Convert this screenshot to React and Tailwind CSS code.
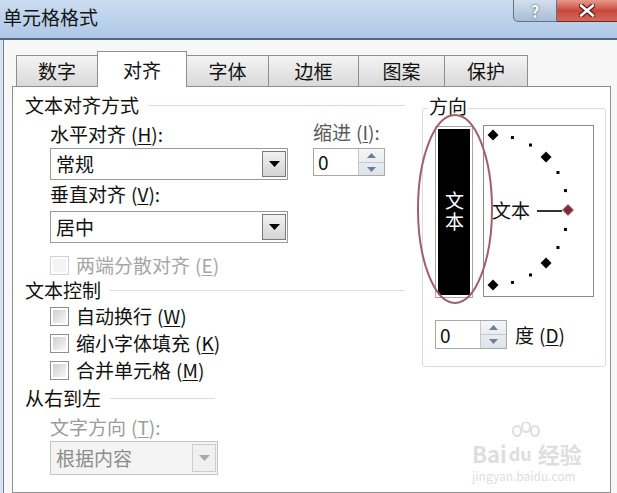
import React from 'react';

// underlined access key, e.g. (H)
const Key = ({ k }) => (
  <span className="ml-[5px]">
    (<span className="underline underline-offset-2">{k}</span>)
  </span>
);

const Checkbox = ({ disabled }) => (
  <span
    className={`flex w-[19px] h-[19px] shrink-0 border p-[2px] ${
      disabled ? 'border-[#d2d2d2]' : 'border-[#8e8f8f]'
    }`}
  >
    <span
      className={`flex-1 ${
        disabled ? 'bg-[#f4f4f4]' : 'bg-linear-to-br from-[#cfcfcf] to-[#f8f8f8]'
      }`}
    />
  </span>
);

const Select = ({ value, disabled, className = '' }) => (
  <div
    className={`flex items-center justify-between border ${
      disabled ? 'border-[#c4c4c4] bg-[#f4f4f4] text-[#8c8c8c]' : 'border-[#9a9a9a] bg-white'
    } ${className}`}
  >
    <span className="pl-[5px]">{value}</span>
    <span
      className={`mr-px flex h-[calc(100%-4px)] w-[24px] items-center justify-center border ${
        disabled
          ? 'border-[#cdcdcd] bg-[#f0f0f0]'
          : 'border-[#7a7a7a] bg-linear-to-b from-[#f2f2f2] to-[#d4d4d4]'
      }`}
    >
      <svg width="11" height="6" viewBox="0 0 11 6">
        <path d="M0 0h11L5.5 6z" fill={disabled ? '#a8a8a8' : '#000'} />
      </svg>
    </span>
  </div>
);

const Spin = ({ value, className = '' }) => (
  <div className={`flex border border-[#a8a8a8] bg-white ${className}`}>
    <span className="flex-1 pl-[4px] flex items-center">{value}</span>
    <span className="flex w-[26px] flex-col border-l border-[#c8c8c8] bg-linear-to-b from-[#f4f6f8] to-[#dde3ea]">
      <span className="flex flex-1 items-center justify-center border-b border-[#c3c9d0]">
        <svg width="9" height="5" viewBox="0 0 9 5">
          <path d="M0 5h9L4.5 0z" fill="#6d7f96" />
        </svg>
      </span>
      <span className="flex flex-1 items-center justify-center">
        <svg width="9" height="5" viewBox="0 0 9 5">
          <path d="M0 0h9L4.5 5z" fill="#6d7f96" />
        </svg>
      </span>
    </span>
  </div>
);

const Section = ({ title, line, className = '' }) => (
  <div className={`flex h-[24px] items-center ${className}`}>
    <span>{title}</span>
    <span className={`ml-[9px] border-t border-[#d6dde4] ${line}`} />
  </div>
);

const tabs = [
  { label: '数字', w: 'w-[81px] border-l' },
  { label: '对齐', w: 'w-[90px] border-l border-r', active: true },
  { label: '字体', w: 'w-[81px]' },
  { label: '边框', w: 'w-[90px] border-l' },
  { label: '图案', w: 'w-[86px] border-l' },
  { label: '保护', w: 'w-[84px] border-l border-r' },
];

// semicircle of angle marks in the orientation box
const Orientation = () => {
  const cx = 9;
  const cy = 84;
  const r = 75;
  const marks = [];
  for (let a = 90; a >= -90; a -= 15) {
    const x = cx + r * Math.cos((a * Math.PI) / 180);
    const y = cy - r * Math.sin((a * Math.PI) / 180);
    if (a % 45 === 0) {
      const red = a === 0;
      marks.push(
        <polygon
          key={a}
          points={`${x},${y - 5.5} ${x + 5.5},${y} ${x},${y + 5.5} ${x - 5.5},${y}`}
          fill={red ? '#7e2a36' : '#000'}
          stroke={red ? '#b07080' : 'none'}
        />
      );
    } else {
      marks.push(<rect key={a} x={x - 1.5} y={y - 1.5} width="3" height="3" fill="#000" />);
    }
  }
  return (
    <div className="relative ml-[10px] h-[172px] w-[111px] border border-[#8a8a8a] bg-white">
      <svg width="109" height="170" className="absolute left-0 top-0">
        {marks}
        <line x1="53" y1="85" x2="78" y2="85" stroke="#000" strokeWidth="1.6" />
      </svg>
      <span className="absolute left-[8px] top-[72px]">文本</span>
    </div>
  );
};

export default function App() {
  return (
    <div className="relative h-[493px] w-[617px] overflow-hidden bg-[#f7f7f7] font-['Noto_Sans_CJK_SC','Noto_Sans',sans-serif] text-[19px] leading-[24px] text-[#111]">
      {/* title bar */}
      <div className="flex h-[40px] items-start justify-between border-b-2 border-[#56687e] bg-linear-to-b from-[#cadcf0] via-[#bdd2ec] to-[#aec8e6]">
        <span className="pl-[3px] pt-[5px] text-[#151515]">单元格格式</span>
        <div className="flex">
          <span className="flex h-[22px] w-[44px] items-center justify-center rounded-bl-[5px] border border-t-0 border-[#61738b] bg-linear-to-b from-[#d3dfec] to-[#a9bdd5] text-[16px] font-bold leading-none text-white [text-shadow:0_0_2px_#33445a]">
            ?
          </span>
          <span className="flex h-[22px] w-[60px] items-center justify-center border-b border-[#6a2a22] bg-linear-to-b from-[#e59a8e] via-[#c9463b] to-[#d2685b]">
            <svg width="16" height="13" viewBox="0 0 16 13">
              <path d="M2 1.5l12 10M14 1.5l-12 10" stroke="#5a1c16" strokeWidth="5" strokeLinecap="round" />
              <path d="M2 1.5l12 10M14 1.5l-12 10" stroke="#fff" strokeWidth="2.6" strokeLinecap="round" />
            </svg>
          </span>
        </div>
      </div>

      {/* body */}
      <div className="flex h-[453px]">
        <div className="w-[3px] bg-[#d8e3ef]" />
        <div className="w-px bg-[#6f7f92]" />
        <div className="flex flex-1 flex-col">
          {/* tab strip */}
          <div className="flex h-[48px] items-end pl-[12px]">
            {tabs.map((t) => (
              <div
                key={t.label}
                className={`flex items-center justify-center border-t border-[#8e8f8f] ${t.w} ${
                  t.active
                    ? 'relative top-px z-10 h-[36px] bg-white'
                    : 'h-[31px] bg-linear-to-b from-[#f4f4f4] to-[#d9d9d9]'
                }`}
              >
                {t.label}
              </div>
            ))}
          </div>

          {/* tab page */}
          <div className="ml-[8px] flex h-[420px] w-[599px] border border-[#8e8f8f] bg-white pl-[12px] pt-[6px]">
            {/* left column */}
            <div className="flex w-[380px] flex-col">
              <Section title="文本对齐方式" line="flex-1" />
              <div className="mt-[5px] flex">
                <div className="ml-[25px] flex w-[238px] flex-col">
                  <div className="h-[24px]">
                    水平对齐<Key k="H" />:
                  </div>
                  <Select value="常规" className="mt-[2px] h-[32px]" />
                  <div className="mt-[2px] h-[24px]">
                    垂直对齐<Key k="V" />:
                  </div>
                  <Select value="居中" className="mt-[5px] h-[32px]" />
                </div>
                <div className="ml-[25px] flex flex-col">
                  <div className="-mt-[2px] h-[24px] text-[#5a5a5a]">
                    缩进<Key k="I" />:
                  </div>
                  <Spin value="0" className="mt-[4px] h-[28px] w-[72px]" />
                </div>
              </div>
              <div className="ml-[25px] mt-[10px] flex h-[24px] items-center gap-[7px] text-[#a6a6a6]">
                <Checkbox disabled />
                <span>
                  两端分散对齐<Key k="E" />
                </span>
              </div>

              <Section title="文本控制" line="flex-1" className="mt-[1px]" />
              <div className="ml-[25px] mt-[2px] flex flex-col gap-[3px]">
                {[
                  ['自动换行', 'W'],
                  ['缩小字体填充', 'K'],
                  ['合并单元格', 'M'],
                ].map(([label, k]) => (
                  <div key={k} className="flex h-[24px] items-center gap-[7px]">
                    <Checkbox />
                    <span>
                      {label}
                      <Key k={k} />
                    </span>
                  </div>
                ))}
              </div>

              <Section title="从右到左" line="w-[105px]" className="mt-[4px]" />
              <div className="ml-[25px] mt-[5px] h-[24px] text-[#9c9c9c]">
                文字方向<Key k="T" />:
              </div>
              <Select value="根据内容" disabled className="ml-[25px] mt-[2px] h-[34px] w-[168px]" />
            </div>

            {/* direction group */}
            <div className="relative ml-[17px] mt-[15px] h-[259px] w-[184px] rounded-[3px] border border-[#d6dde4]">
              <span className="absolute -top-[15px] left-[5px] bg-white px-px">方向</span>
              <div className="mt-[16px] flex items-start pl-[12px]">
                <div className="mt-px h-[172px] w-[38px] border border-[#a6a6a6] p-[2px]">
                  <div className="flex h-full items-center justify-center bg-black text-white">
                    <span className="leading-[24px] tracking-[2px] [writing-mode:vertical-rl]">文本</span>
                  </div>
                </div>
                <Orientation />
              </div>
              <div className="ml-[12px] mt-[22px] flex items-center">
                <Spin value="0" className="h-[29px] w-[72px]" />
                <span className="ml-[8px]">
                  度<Key k="D" />
                </span>
              </div>
              {/* highlight ring */}
              <svg width="78" height="194" className="pointer-events-none absolute -left-[7px] top-[3px]">
                <ellipse cx="39" cy="97" rx="37" ry="94" fill="none" stroke="#a35e6c" strokeWidth="2" />
              </svg>
            </div>
          </div>
        </div>
      </div>

      {/* watermark */}
      <div className="absolute left-[472px] top-[440px] flex flex-col items-start text-[#dedede]">
        <div className="flex items-end gap-[2px] text-[22px] font-bold leading-[22px]">
          <span>Bai</span>
          <span className="relative">
            <svg width="34" height="26" viewBox="0 0 34 26" className="absolute -top-[18px] left-0">
              <ellipse cx="8" cy="9" rx="4" ry="5" fill="none" stroke="#dedede" strokeWidth="2" />
              <ellipse cx="17" cy="5" rx="4" ry="5" fill="none" stroke="#dedede" strokeWidth="2" />
              <ellipse cx="26" cy="9" rx="4" ry="5" fill="none" stroke="#dedede" strokeWidth="2" />
            </svg>
            <span className="text-[18px]">du</span>
          </span>
          <span className="ml-[4px]">经验</span>
        </div>
        <span className="mt-[5px] text-[12px] leading-[14px]">jingyan.baidu.com</span>
      </div>
    </div>
  );
}
